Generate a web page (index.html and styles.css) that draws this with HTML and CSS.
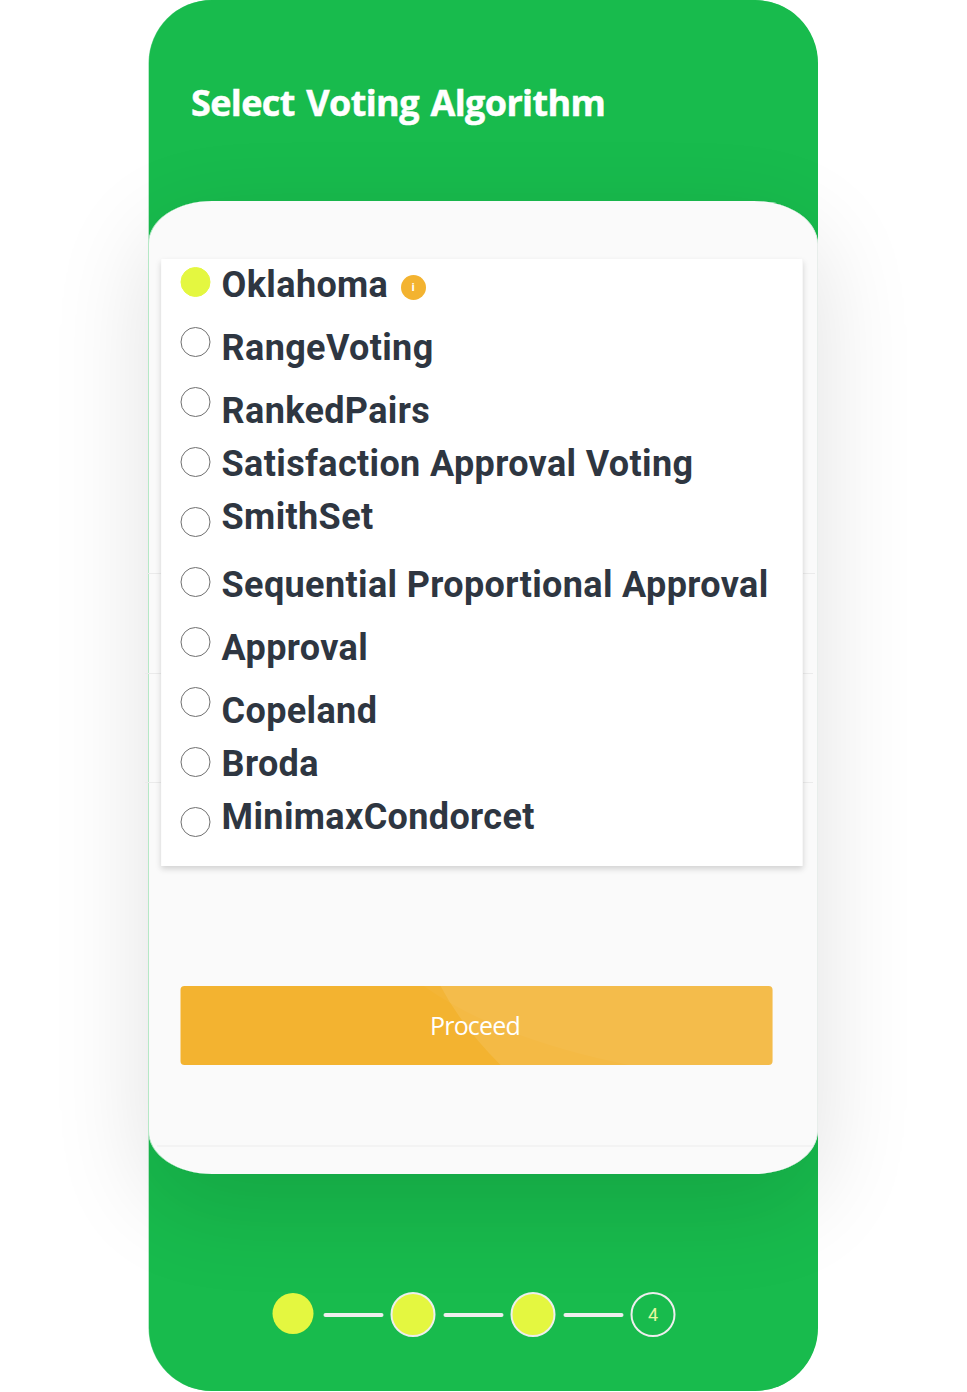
FILE: index.html
```html
<!DOCTYPE html>
<html lang="en">
<head>
<meta charset="utf-8">
<title>Select Voting Algorithm</title>
<link rel="stylesheet" href="styles.css">
</head>
<body>
<main class="phone">
  <h1 class="title">Select Voting Algorithm</h1>
  <section class="card">
    <i class="rule rule-a"></i><i class="rule rule-b"></i><i class="rule rule-c"></i><i class="rule rule-d"></i>
    <div class="panel">
      <div class="radios">
        <span class="radio selected"></span><span class="radio"></span><span class="radio"></span><span class="radio"></span><span class="radio"></span><span class="radio"></span><span class="radio"></span><span class="radio"></span><span class="radio"></span><span class="radio"></span>
      </div>
      <div class="labels">
        <div class="label"><span>Oklahoma</span><span class="info">i</span></div>
        <div class="label">RangeVoting</div>
        <div class="label short">RankedPairs</div>
        <div class="label short">Satisfaction Approval Voting</div>
        <div class="label tall">SmithSet</div>
        <div class="label">Sequential Proportional Approval</div>
        <div class="label">Approval</div>
        <div class="label short">Copeland</div>
        <div class="label short">Broda</div>
        <div class="label">MinimaxCondorcet</div>
      </div>
    </div>
    <button class="proceed">
      <svg class="waves" viewBox="0 0 592 79" width="592" height="79">
        <path d="M260 0Q281 40 320 79H592V0Z" fill="#fff" fill-opacity=".1"/>
        <path d="M243 0Q318 53 448 79H592V0Z" fill="#fff" fill-opacity=".035"/>
      </svg>
      <span class="proceed-text">Proceed</span>
    </button>
  </section>
  <div class="steps">
    <span class="step first"></span><span class="bar"></span>
    <span class="step done"></span><span class="bar"></span>
    <span class="step done"></span><span class="bar"></span>
    <span class="step">4</span>
  </div>
</main>
</body>
</html>
```
FILE: styles.css
```css
* { box-sizing: border-box; }
body { margin: 0; background: #fff; overflow: hidden; }
.phone {
  width: 669px; height: 1391px; margin-left: 149px;
  background: #18bb4d;
  border-radius: 63px;
  box-shadow: -.5px 0 0 rgba(24, 187, 77, .6);
}
.title {
  margin: 0; height: 201px; padding: 78px 0 0 42px;
  font: 700 36px/50px "Open Sans", "Noto Sans", sans-serif;
  letter-spacing: -.62px; word-spacing: 2.8px; color: #fff; white-space: nowrap;
  -webkit-text-stroke: .5px #fff;
}
.card {
  position: relative; width: 670px; height: 973px; margin-left: -1px;
  padding: 58px 0 0 12px;
  background: #fafafa; border-left: 1px solid #b5e8c6; border-right: 1px solid #e8eeeb;
  border-radius: 64px / 43px;
  box-shadow: 0 30px 100px rgba(0, 0, 0, .12);
}
.rule { position: absolute; height: 1px; width: 668px; background: #ebebeb; }
.rule-a { left: -2px; top: 372px; }
.rule-b { left: -4px; top: 472px; }
.rule-c { left: -4px; top: 581px; }
.rule-d { left: 8px; top: 944px; width: 656px; height: 2px; background: #f3f3f3; }
.panel {
  position: relative; display: flex; gap: 11px;
  width: 642px; height: 607px; padding: 5px 0 0 18px;
  background: #fff; border-left: 1px solid #fcfcfc; border-right: 1px solid #f7f7f7;
  box-shadow: 0 3px 6px rgba(0, 0, 0, .16);
}
.radios { display: flex; flex-direction: column; gap: 30px; padding-top: 3px; transform: translateX(.5px); }
.radio { width: 30px; height: 30px; flex: none; border: 1px solid #707070; border-radius: 50%; background: #fff; }
.radio.selected { background: #e4f740; border-color: #e4f740; }
.labels {
  padding-left: .6px;
  font: 700 36px/42px Roboto, sans-serif; letter-spacing: .36px;
  color: #2e3641; white-space: nowrap;
}
.label { display: flex; height: 63px; }
.label.short { height: 53px; }
.label.tall { height: 68px; }
.info {
  width: 25px; height: 25px; margin: 11px 0 0 12.5px; border-radius: 50%;
  background: #f3b330; color: #fff; text-align: center;
  font: 700 11px/24px "Noto Sans", sans-serif; letter-spacing: 0;
}
.proceed {
  position: relative; display: block; width: 592px; height: 79px;
  margin: 120px 0 0 20px; padding: 0; border: 0; border-radius: 4px;
  background: #f3b330; overflow: hidden; transform: translateX(-.5px);
}
.waves { display: block; }
.proceed-text {
  position: absolute; inset: 0; padding-right: 3px; text-align: center;
  font: 400 25px/78px "Open Sans", "Noto Sans", sans-serif; letter-spacing: -.8px; color: #fff;
}
.steps { display: flex; align-items: center; padding: 118px 0 0 124px; transform: translateX(-.5px); }
.step {
  width: 45px; height: 45px; flex: none; border: 2px solid #eee; border-radius: 50%;
  font: 400 18px/42px Roboto, sans-serif; color: #e9f8a0; text-align: center;
}
.step.done { background: #e4f740; }
.step.first { width: 41px; height: 41px; margin: 0 2px 2px 0; border: 0; background: #e4f740; }
.bar { width: 60px; height: 4px; flex: none; margin: 0 7.5px 0 7.5px; border-radius: 2px; background: #eee; }
```
